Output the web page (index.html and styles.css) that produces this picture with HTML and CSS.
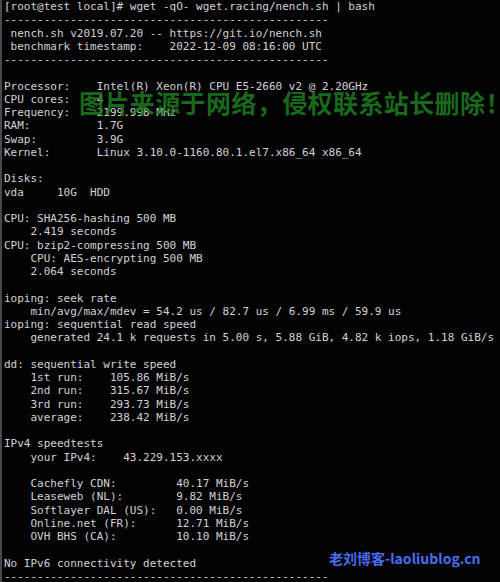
FILE: index.html
```html
<!DOCTYPE html>
<html lang="zh-CN">
<head>
<meta charset="utf-8">
<title>nench</title>
<link rel="stylesheet" href="styles.css">
</head>
<body>
<div class="term">
<pre class="out">[root@test local]# wget -qO- wget.racing/nench.sh | bash
-------------------------------------------------
 nench.sh v2019.07.20 -- https://git.io/nench.sh
 benchmark timestamp:    2022-12-09 08:16:00 UTC
-------------------------------------------------

Processor:    Intel(R) Xeon(R) CPU E5-2660 v2 @ 2.20GHz
CPU cores:    4
Frequency:    2199.998 MHz
RAM:          1.7G
Swap:         3.9G
Kernel:       Linux 3.10.0-1160.80.1.el7.x86_64 x86_64

Disks:
vda     10G  HDD

CPU: SHA256-hashing 500 MB
    2.419 seconds
CPU: bzip2-compressing 500 MB
    CPU: AES-encrypting 500 MB
    2.064 seconds

ioping: seek rate
    min/avg/max/mdev = 54.2 us / 82.7 us / 6.99 ms / 59.9 us
ioping: sequential read speed
    generated 24.1 k requests in 5.00 s, 5.88 GiB, 4.82 k iops, 1.18 GiB/s

dd: sequential write speed
    1st run:    105.86 MiB/s
    2nd run:    315.67 MiB/s
    3rd run:    293.73 MiB/s
    average:    238.42 MiB/s

IPv4 speedtests
    your IPv4:    43.229.153.xxxx

    Cachefly CDN:         40.17 MiB/s
    Leaseweb (NL):        9.82 MiB/s
    Softlayer DAL (US):   0.00 MiB/s
    Online.net (FR):      12.71 MiB/s
    OVH BHS (CA):         10.10 MiB/s

No IPv6 connectivity detected
-------------------------------------------------</pre>
<div class="mark-green">图片来源于网络，侵权联系站长删除！</div>
<div class="mark-blue">老刘博客-laoliublog.cn</div>
</div>
</body>
</html>
```
FILE: styles.css
```css
html, body {
  margin: 0;
  padding: 0;
  background: #000;
}
.term {
  position: relative;
  width: 498px;
  height: 582px;
  overflow: hidden;
  background: #030303;
  border-left: 2px solid #4a4a4a;
}
.out {
  margin: 0;
  padding: 0 0 0 2px;
  font-family: "DejaVu Sans Mono", monospace;
  font-size: 11px;
  line-height: 13.25px;
  color: #d2d2d2;
  white-space: pre;
}
.mark-green {
  position: absolute;
  left: 77px;
  top: 85px;
  font-family: "Noto Sans CJK SC", sans-serif;
  font-weight: 700;
  font-size: 25px;
  letter-spacing: 0.4px;
  line-height: 34px;
  color: rgba(30, 125, 32, 0.85);
  white-space: nowrap;
}
.mark-blue {
  position: absolute;
  left: 327px;
  top: 547px;
  font-family: "Noto Sans CJK SC", sans-serif;
  font-weight: 700;
  font-size: 14px;
  line-height: 22px;
  color: #4a6cf2;
  white-space: nowrap;
}
```
